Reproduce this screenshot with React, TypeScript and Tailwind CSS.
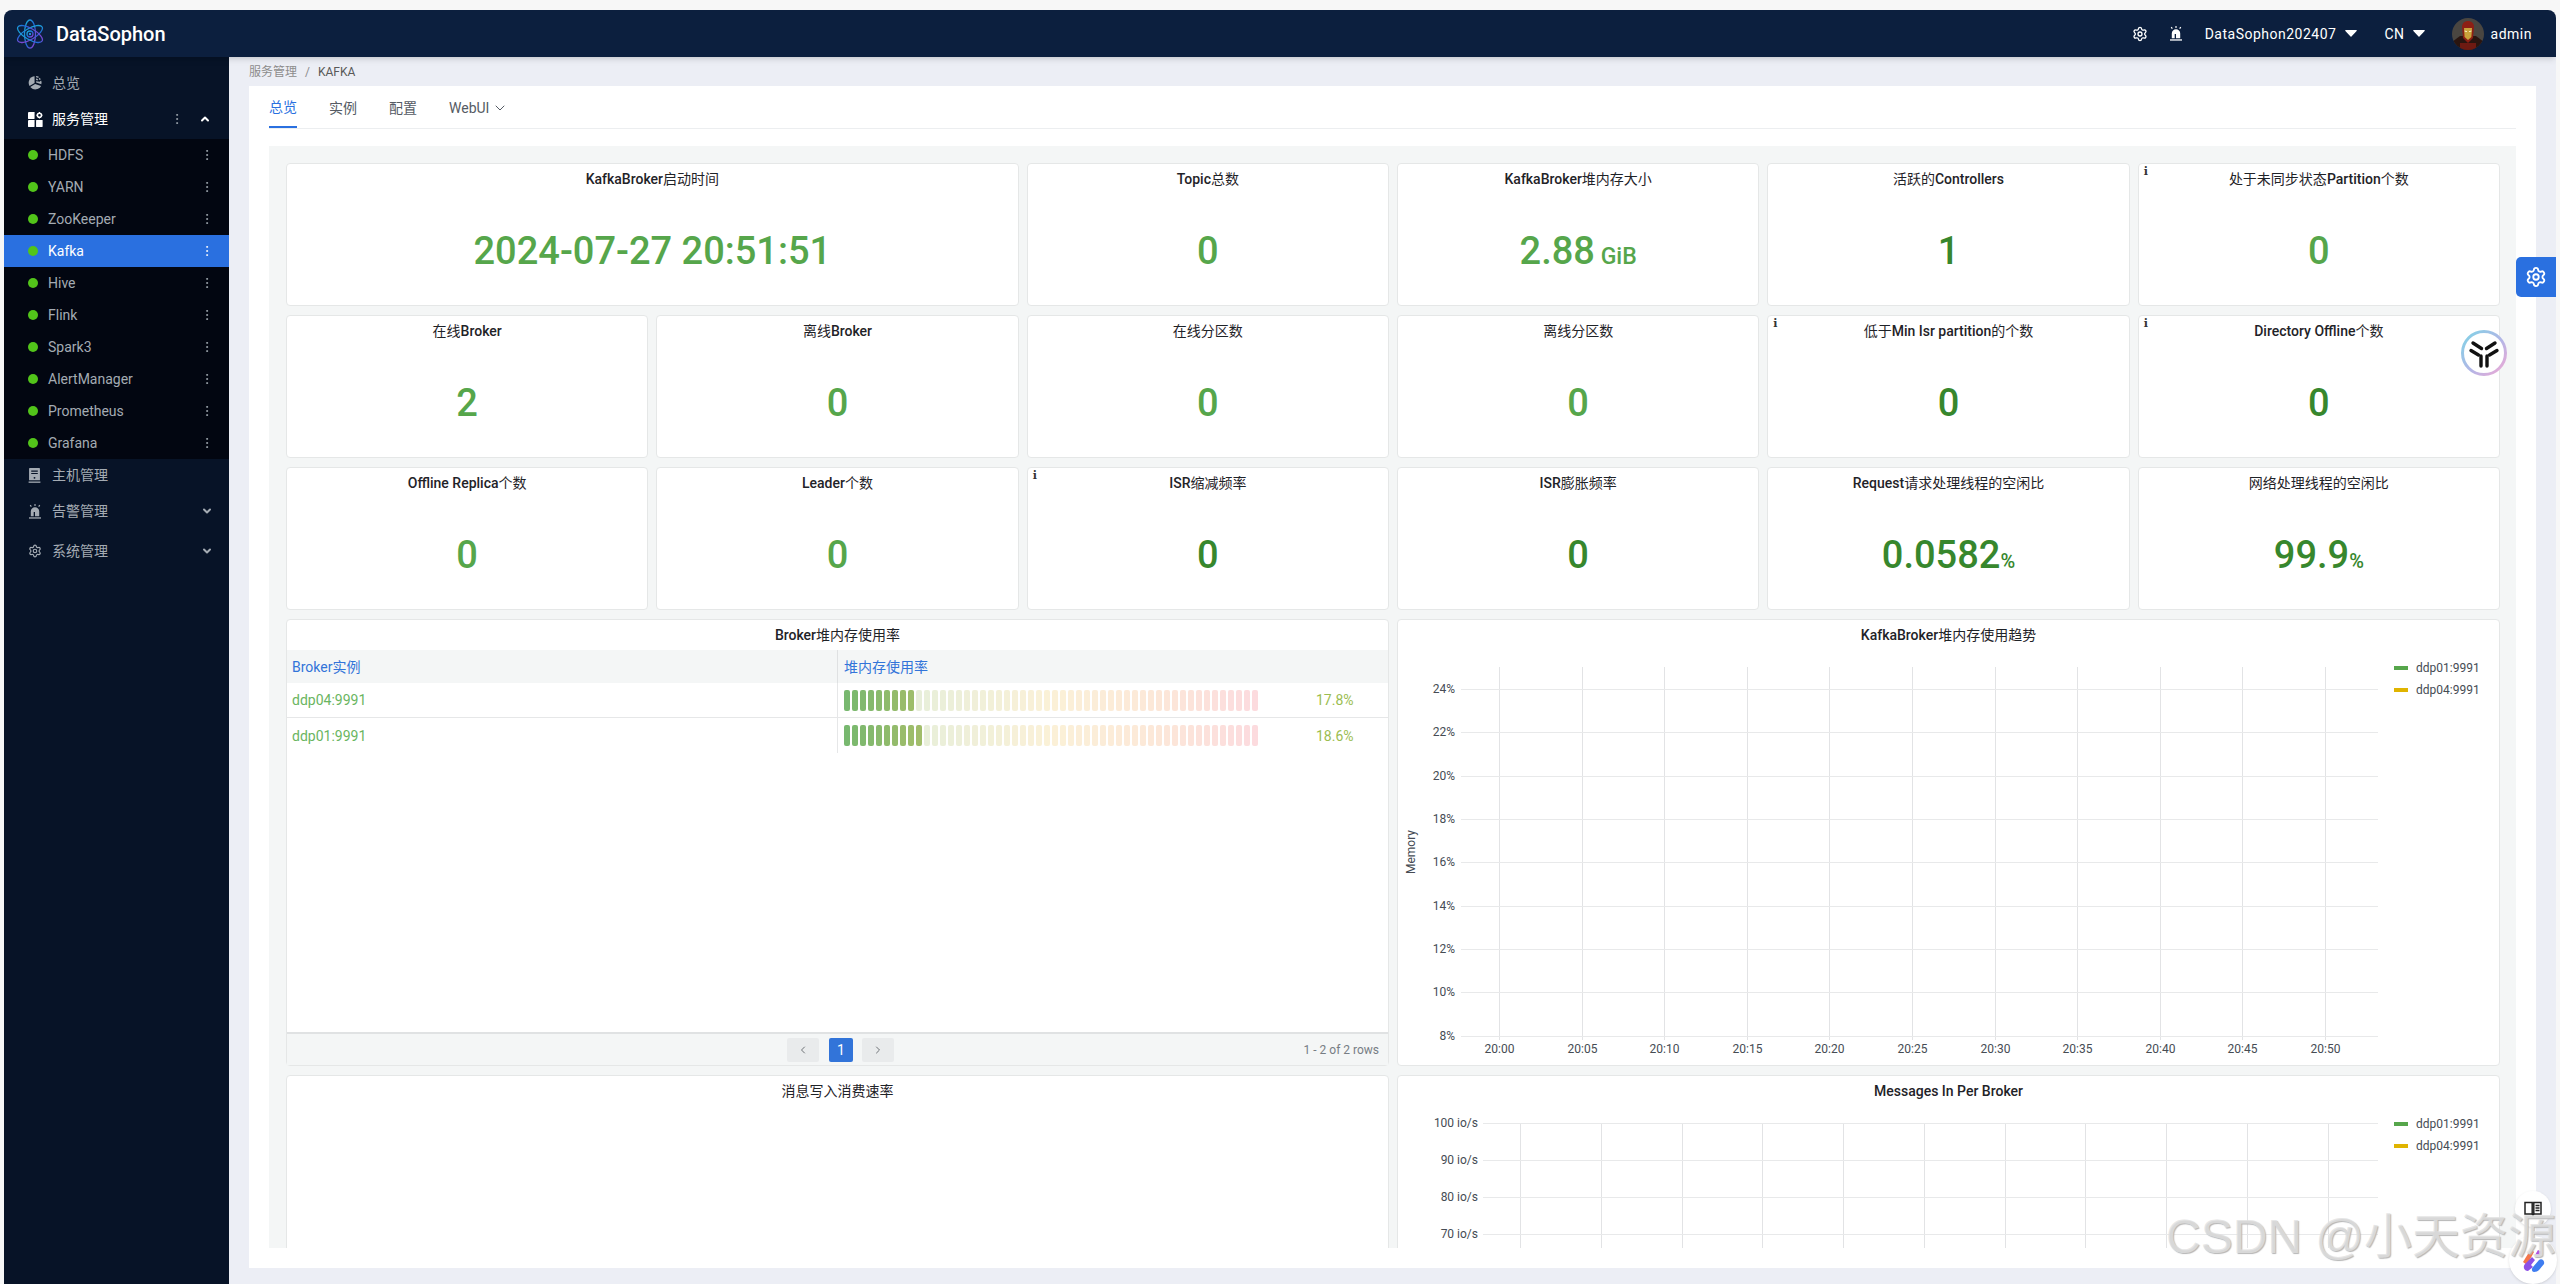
import React from "react";
import { ChevronDown, ChevronLeft, ChevronRight, ChevronUp, EllipsisVertical, Settings } from "lucide-react";

const services = ["HDFS", "YARN", "ZooKeeper", "Kafka", "Hive", "Flink", "Spark3", "AlertManager", "Prometheus", "Grafana"];

const LIGHT = "text-[#56a64b]";
const DARK = "text-[#37872d]";

const stats = [
  { title: "KafkaBroker启动时间", value: "2024-07-27 20:51:51", color: LIGHT, span: "col-span-2" },
  { title: "Topic总数", value: "0", color: LIGHT },
  { title: "KafkaBroker堆内存大小", value: "2.88", unit: " GiB", unitSize: "text-[23px]", color: LIGHT },
  { title: "活跃的Controllers", value: "1", color: DARK },
  { title: "处于未同步状态Partition个数", value: "0", color: LIGHT, info: true },
  { title: "在线Broker", value: "2", color: LIGHT },
  { title: "离线Broker", value: "0", color: LIGHT },
  { title: "在线分区数", value: "0", color: LIGHT },
  { title: "离线分区数", value: "0", color: LIGHT },
  { title: "低于Min Isr partition的个数", value: "0", color: DARK, info: true },
  { title: "Directory Offline个数", value: "0", color: DARK, info: true },
  { title: "Offline Replica个数", value: "0", color: LIGHT },
  { title: "Leader个数", value: "0", color: LIGHT },
  { title: "ISR缩减频率", value: "0", color: DARK, info: true },
  { title: "ISR膨胀频率", value: "0", color: DARK },
  { title: "Request请求处理线程的空闲比", value: "0.0582", unit: "%", unitSize: "text-[20px]", color: DARK },
  { title: "网络处理线程的空闲比", value: "99.9", unit: "%", unitSize: "text-[20px]", color: DARK },
];

const brokers = [
  { name: "ddp04:9991", pct: "17.8%", filled: 9 },
  { name: "ddp01:9991", pct: "18.6%", filled: 10 },
];

const stops: [number, number[]][] = [
  [0, [86, 166, 75]],
  [0.5, [234, 184, 57]],
  [0.75, [240, 140, 60]],
  [1, [242, 73, 92]],
];

function gaugeColor(t: number, alpha: number) {
  let i = 0;
  while (i < stops.length - 2 && t > stops[i + 1][0]) i++;
  const [t0, c0] = stops[i];
  const [t1, c1] = stops[i + 1];
  const k = (t - t0) / (t1 - t0);
  const c = c0.map((v, n) => Math.round(v + (c1[n] - v) * k));
  return `rgba(${c[0]},${c[1]},${c[2]},${alpha})`;
}

const Gauge = ({ filled }: { filled: number }) => (
  <div className="flex gap-[2px]">
    {Array.from({ length: 52 }).map((_, i) => (
      <div
        key={i}
        className="h-[21px] w-[6px] rounded-[2px]"
        style={{ backgroundColor: gaugeColor(i / 51, i < filled ? 0.8 : 0.2) }}
      />
    ))}
  </div>
);

const Logo = () => (
  <svg width="28" height="30" viewBox="0 0 28 30" fill="none">
    <defs>
      <linearGradient id="atom" x1="0" y1="0" x2="1" y2="1">
        <stop offset="0" stopColor="#19b5d8" />
        <stop offset="0.55" stopColor="#2266d8" />
        <stop offset="1" stopColor="#a03ad0" />
      </linearGradient>
    </defs>
    <g stroke="url(#atom)" strokeWidth="1.3">
      <ellipse cx="14" cy="15" rx="5.5" ry="14" />
      <ellipse cx="14" cy="15" rx="5.5" ry="14" transform="rotate(60 14 15)" />
      <ellipse cx="14" cy="15" rx="5.5" ry="14" transform="rotate(-60 14 15)" />
      <circle cx="14" cy="15" r="3" />
    </g>
    <circle cx="14" cy="15" r="1.2" fill="#2a8ae0" />
  </svg>
);

const PieIcon = () => (
  <svg width="15" height="15" viewBox="0 0 16 16" fill="#a4abb3">
    <path d="M7 1.2A7 7 0 0 0 1.6 11.6L7 8.6z" />
    <path d="M2.4 12.8A7 7 0 0 0 14 11.6L7.6 9.6z" />
    <path d="M8.6 1v1.5a5 5 0 0 1 2.2.7l.8-1.3A6.6 6.6 0 0 0 8.6 1zM8.6 3.8v1.5c.6.1 1 .3 1.5.6l.8-1.2a5 5 0 0 0-2.3-.9zM12.4 3l-1 1.2c.4.4.7.7 1 1.2l1.3-.8c-.4-.6-.8-1.1-1.3-1.6zM8.6 6.6V8l5.6 1.8A6.6 6.6 0 0 0 14.2 6l-1.4.5c.1.3.2.5.2.8z" />
  </svg>
);

const AppIcon = () => (
  <svg width="15" height="15" viewBox="0 0 16 16" fill="#fff">
    <rect x="0" y="0" width="7" height="7.4" rx="0.5" />
    <rect x="0" y="8.6" width="7" height="7.4" rx="0.5" />
    <rect x="8.6" y="8.6" width="7" height="7.4" rx="0.5" />
    <circle cx="12.2" cy="3.4" r="2.2" fill="none" stroke="#fff" strokeWidth="1.6" />
    <path d="M12.2 0v1M12.2 5.8v1M9 3.4h1M14.4 3.4h1" stroke="#fff" strokeWidth="1.2" />
  </svg>
);

const ServerIcon = () => (
  <svg width="13" height="15" viewBox="0 0 13 16" fill="#a4abb3">
    <path d="M1.5 0h10a.8.8 0 0 1 .8.8V13H.7V.8a.8.8 0 0 1 .8-.8zM3 2.6v1.3h7V2.6zm0 2.6v1.3h7V5.2zm3.5 4.3a1 1 0 1 0 0 2 1 1 0 0 0 0-2z" fillRule="evenodd" />
    <rect x="0.2" y="14.4" width="12.6" height="1.4" />
  </svg>
);

const SirenIcon = ({ color = "#a4abb3" }: { color?: string }) => (
  <svg width="14" height="15" viewBox="0 0 14 16" fill={color}>
    <path d="M2.5 13V8a4.5 4.5 0 0 1 9 0v5H7V8.5H5.6V13z" />
    <rect x="0.6" y="14.2" width="12.8" height="1.4" />
    <path d="M6.4 0h1.2v2H6.4zM1.4 1.6l1-.8 1.2 1.6-1 .8zM12.6 1.6l-1-.8-1.2 1.6 1 .8z" />
  </svg>
);

const Caret = () => (
  <svg width="12" height="7" viewBox="0 0 12 7" fill="#fff">
    <path d="M.8 0h10.4a.6.6 0 0 1 .45 1L6.45 6.6a.6.6 0 0 1-.9 0L.35 1A.6.6 0 0 1 .8 0z" />
  </svg>
);

const Avatar = () => (
  <svg width="32" height="32" viewBox="0 0 32 32" className="rounded-full">
    <rect width="32" height="32" fill="#4a4641" />
    <path d="M0 32V24l8-6 16 0 8 6v8z" fill="#2a1510" />
    <path d="M10 9c0-4 3-6 6-6s6 2 6 6l-1 11-5 5-5-5z" fill="#8d1f14" />
    <path d="M12 10h8l-.6 9-3.4 3-3.4-3z" fill="#c9a23a" />
    <path d="M12.6 12.5l2.4.8v.8l-2.4-.5zM19.4 12.5l-2.4.8v.8l2.4-.5z" fill="#fff6d8" />
    <path d="M8 25h16v7H8z" fill="#6e1a12" />
  </svg>
);

const YLogo = () => (
  <svg width="48" height="48" viewBox="0 0 48 48" fill="none">
    <defs>
      <linearGradient id="ring" x1="0" y1="0" x2="1" y2="1">
        <stop offset="0" stopColor="#7fd3e6" />
        <stop offset="0.55" stopColor="#b3b6e6" />
        <stop offset="1" stopColor="#f0a8d4" />
      </linearGradient>
    </defs>
    <circle cx="24" cy="24" r="23" fill="#fff" />
    <circle cx="24" cy="24" r="21.5" stroke="url(#ring)" strokeWidth="3" />
    <g stroke="#111" strokeWidth="3.4" strokeLinecap="round">
      <path d="M13 14l8.5 5.5M35 14l-8.5 5.5" />
      <path d="M11 21.5l7.5 4.5M37 21.5l-7.5 4.5" />
      <path d="M21 27v10M27 27v10" />
    </g>
  </svg>
);

const BookIcon = () => (
  <svg width="18" height="16" viewBox="0 0 18 16" fill="none" stroke="#222" strokeWidth="1.5">
    <path d="M1 1.5h7.2v11.5H1zM9.8 1.5H17v11.5H9.8z" />
    <path d="M8.2 13l.8 2 .8-2M11.5 4.5h4M11.5 7h4M11.5 9.5h4" />
  </svg>
);

const BrainIcon = () => (
  <svg width="26" height="26" viewBox="0 0 26 26">
    <path d="M3 15L11 2l3 3-7 13z" fill="#f4754a" />
    <path d="M8 24c-4 0-6-5-2-8l6-6 3 3-4 5 2 2z" fill="#8d4fe6" />
    <path d="M14 25c-2 0-3-3-1-5l6-7c3-2 6 1 5 4l-5 6c-1 1-3 2-5 2z" fill="#3f7df0" />
    <path d="M15 8l3-5 4 2-4 6z" fill="#b04fe0" />
  </svg>
);

// latin part of a title is medium weight, the CJK font stays regular
const Title = ({ text }: { text: string }) => (
  <div className="h-[30px] pt-[5px] text-center text-sm leading-[20px] text-[#1f2328]">
    {text.split(/([A-Za-z ]+)/).map((part, i) =>
      /[A-Za-z]/.test(part) ? (
        <span key={i} className="font-medium">{part}</span>
      ) : (
        part
      )
    )}
  </div>
);

const StatCard = ({ title, value, unit, unitSize, color, span, info }: (typeof stats)[number]) => (
  <div className={`relative flex h-[143px] flex-col rounded-[4px] border border-[#e5e7e7] bg-white ${span ?? ""}`}>
    {info && (
      <span className="absolute left-[5px] top-[1px] font-[DejaVu_Serif,serif] text-[11px] font-bold leading-[14px] text-[#333]">
        i
      </span>
    )}
    <Title text={title} />
    <div className={`flex flex-1 items-center justify-center pt-[3px] text-[38px] font-medium leading-none whitespace-pre ${color}`}>
      <span>
        {value}
        {unit && <span className={unitSize}>{unit}</span>}
      </span>
    </div>
  </div>
);

const hLines1 = [689, 732, 776, 819, 862, 906, 949, 992, 1036];
const yLabels1 = ["24%", "22%", "20%", "18%", "16%", "14%", "12%", "10%", "8%"];
const xTicks1 = ["20:00", "20:05", "20:10", "20:15", "20:20", "20:25", "20:30", "20:35", "20:40", "20:45", "20:50"];
const hLines2 = [1123, 1160, 1197, 1234];
const yLabels2 = ["100 io/s", "90 io/s", "80 io/s", "70 io/s"];

const Legend = ({ y }: { y: number }) => (
  <g fontSize="12" fill="#464c54">
    <rect x="2395" y={y - 2} width="14" height="4" fill="#56a64b" />
    <text x="2417" y={y + 4}>ddp01:9991</text>
    <rect x="2395" y={y + 20} width="14" height="4" fill="#e0b400" />
    <text x="2417" y={y + 26}>ddp04:9991</text>
  </g>
);

const HeapChart = () => (
  <svg width="1100" height="415" viewBox="1399 650 1100 415" className="block">
    {xTicks1.map((t, i) => {
      const x = Math.round(1500 + 82.6 * i) + 0.5;
      return (
        <g key={t}>
          <line x1={x} x2={x} y1="667" y2="1040" stroke="#e2e3e5" />
          <text x={x} y="1053" textAnchor="middle" fontSize="12" fill="#464c54">{t}</text>
        </g>
      );
    })}
    {hLines1.map((y, i) => (
      <g key={y}>
        <line x1="1462" x2="2379" y1={y + 0.5} y2={y + 0.5} stroke="#e8e9ea" />
        <text x="1456" y={y + 4} textAnchor="end" fontSize="12" fill="#464c54">{yLabels1[i]}</text>
      </g>
    ))}
    <text x="0" y="0" fontSize="12" fill="#464c54" textAnchor="middle" transform="translate(1416 852) rotate(-90)">Memory</text>
    <Legend y={668} />
  </svg>
);

const MessagesChart = () => (
  <svg width="1100" height="142" viewBox="1399 1106 1100 142" className="block">
    {Array.from({ length: 11 }).map((_, i) => {
      const x = Math.round(1521 + 80.75 * i) + 0.5;
      return <line key={i} x1={x} x2={x} y1="1123" y2="1248" stroke="#e2e3e5" />;
    })}
    {hLines2.map((y, i) => (
      <g key={y}>
        <line x1="1484" x2="2379" y1={y + 0.5} y2={y + 0.5} stroke="#e8e9ea" />
        <text x="1479" y={y + 4} textAnchor="end" fontSize="12" fill="#464c54">{yLabels2[i]}</text>
      </g>
    ))}
    <Legend y={1124} />
  </svg>
);

const App = () => {
  return (
    <div className="relative h-[1284px] w-[2560px] overflow-hidden bg-[#f7f7f7] px-[4px] pt-[10px] font-[Roboto,Noto_Sans_CJK_SC,sans-serif]">
      <div className="flex h-[1274px] flex-col overflow-hidden rounded-t-lg">
        {/* Top bar */}
        <header className="relative z-10 flex h-[47px] items-center bg-[#0c1f3e] pl-[12px] pr-[24px] text-white shadow-md">
          <Logo />
          <span className="ml-[12px] text-[20px] font-medium">DataSophon</span>
          <div className="ml-auto flex items-center text-sm tracking-[0.5px]">
            <Settings size={16} />
            <span className="ml-[21px]"><SirenIcon color="#fff" /></span>
            <span className="ml-[22px]">DataSophon202407</span>
            <span className="ml-[9px]"><Caret /></span>
            <span className="ml-[27px]">CN</span>
            <span className="ml-[8px]"><Caret /></span>
            <span className="ml-[27px]"><Avatar /></span>
            <span className="ml-[7px]">admin</span>
          </div>
        </header>

        <div className="flex flex-1 overflow-hidden">
          {/* Sidebar */}
          <aside className="w-[225px] shrink-0 bg-[#071327] text-sm text-[#a4abb3]">
            <div className="flex h-[52px] items-center pl-[24px] pb-[1px]">
              <PieIcon />
              <span className="ml-[9px]">总览</span>
            </div>
            <div className="flex h-[30px] items-center pl-[24px] pb-[10px] text-white">
              <AppIcon />
              <span className="ml-[9px]">服务管理</span>
              <EllipsisVertical size={14} strokeWidth={1.5} className="ml-[62px] text-[#a4abb3]" />
              <ChevronUp size={12} strokeWidth={4} className="ml-[15px]" />
            </div>
            <div className="bg-[#020611]">
              {services.map((s) => (
                <div key={s} className={`flex h-[32px] items-center pl-[24px] ${s === "Kafka" ? "bg-[#2a70e0] text-white" : ""}`}>
                  <span className="h-[10px] w-[10px] rounded-full bg-[#52c41a]" />
                  <span className="ml-[10px] flex-1">{s}</span>
                  <EllipsisVertical size={14} strokeWidth={1.5} className="mr-[15px]" />
                </div>
              ))}
            </div>
            <div className="flex h-[32px] items-center pl-[24px]">
              <ServerIcon />
              <span className="ml-[11px]">主机管理</span>
            </div>
            <div className="mt-[2px] flex h-[36px] items-center pl-[24px]">
              <SirenIcon />
              <span className="ml-[10px] flex-1">告警管理</span>
              <ChevronDown size={12} strokeWidth={4} className="mr-[16px]" />
            </div>
            <div className="mt-[4px] flex h-[36px] items-center pl-[24px]">
              <Settings size={14} />
              <span className="ml-[10px] flex-1">系统管理</span>
              <ChevronDown size={12} strokeWidth={4} className="mr-[16px]" />
            </div>
          </aside>

          {/* Main */}
          <main className="flex-1 bg-[#eceef5] px-[20px]">
            <div className="flex h-[29px] items-center text-xs">
              <span className="text-[#8c8c8c]">服务管理</span>
              <span className="mx-[8px] text-[#8c8c8c]">/</span>
              <span className="text-[#595959]">KAFKA</span>
            </div>
            <div className="h-[1182px] bg-white px-[20px]">
              <div className="flex h-[43px] items-stretch gap-[32px] border-b border-[#eceef0] pt-[1px] text-sm text-[#555b64]">
                <div className="flex items-center border-b-2 border-[#2a70e0] text-[#2a70e0]">总览</div>
                <div className="flex items-center">实例</div>
                <div className="flex items-center">配置</div>
                <div className="flex items-center gap-[3px]">WebUI <ChevronDown size={16} strokeWidth={1.5} /></div>
              </div>

              <div className="mt-[17px] h-[1102px] overflow-hidden bg-[#f4f6f6] pl-[17px] pr-[16px] pt-[17px]">
                <div className="grid grid-cols-6 gap-x-[8px] gap-y-[9px]">
                  {stats.map((s) => (
                    <StatCard key={s.title} {...s} />
                  ))}

                  {/* Heap table */}
                  <div className="col-span-3 flex h-[447px] flex-col rounded-[4px] border border-[#e5e7e7] bg-white">
                    <Title text="Broker堆内存使用率" />
                    <div className="grid grid-cols-[550px_1fr] text-sm">
                      <div className="flex h-[33px] items-center bg-[#f4f6f6] pl-[5px] text-[#3274d9]">Broker实例</div>
                      <div className="flex h-[33px] items-center border-l border-[#dfe1e2] bg-[#f4f6f6] pl-[6px] text-[#3274d9]">堆内存使用率</div>
                      {brokers.map((b, i) => (
                        <React.Fragment key={b.name}>
                          <div className={`flex h-[35px] items-center pl-[5px] text-[#6ab55f] ${i === 0 ? "border-b border-[#e6e7e8]" : ""}`}>{b.name}</div>
                          <div className={`flex h-[35px] items-center border-l border-[#e6e7e8] pl-[6px] ${i === 0 ? "border-b" : ""}`}>
                            <Gauge filled={b.filled} />
                            <span className="ml-[58px] text-[#9bbd50]">{b.pct}</span>
                          </div>
                        </React.Fragment>
                      ))}
                    </div>
                    <div className="mt-auto flex h-[33px] items-center border-t-2 border-[#e0e2e3] bg-[#f4f6f6] pl-[500px]">
                      <span className="flex h-[24px] w-[32px] items-center justify-center rounded-[2px] bg-[#e9ebec] text-[#6e7276]">
                        <ChevronLeft size={12} />
                      </span>
                      <span className="ml-[10px] flex h-[24px] w-[24px] items-center justify-center rounded-[2px] bg-[#3274d9] text-sm text-white">1</span>
                      <span className="ml-[9px] flex h-[24px] w-[32px] items-center justify-center rounded-[2px] bg-[#e9ebec] text-[#6e7276]">
                        <ChevronRight size={12} />
                      </span>
                      <span className="ml-auto pr-[9px] text-xs text-[#777d84]">1 - 2 of 2 rows</span>
                    </div>
                  </div>

                  <div className="col-span-3 h-[447px] rounded-[4px] border border-[#e5e7e7] bg-white">
                    <Title text="KafkaBroker堆内存使用趋势" />
                    <HeapChart />
                  </div>

                  <div className="col-span-3 h-[447px] rounded-[4px] border border-[#e5e7e7] bg-white">
                    <Title text="消息写入消费速率" />
                  </div>

                  <div className="col-span-3 h-[447px] rounded-[4px] border border-[#e5e7e7] bg-white">
                    <Title text="Messages In Per Broker" />
                    <MessagesChart />
                  </div>
                </div>
              </div>
            </div>
          </main>
        </div>
      </div>

      {/* Floating widgets */}
      <div className="absolute left-[2516px] top-[257px] flex h-[40px] w-[40px] items-center justify-center rounded-l-[5px] bg-[#2a70e0] text-white">
        <Settings size={22} />
      </div>
      <div className="absolute left-[2460px] top-[329px]">
        <YLogo />
      </div>
      <div className="absolute left-[2515px] top-[1191px] flex h-[36px] w-[36px] items-center justify-center rounded-full bg-white shadow">
        <BookIcon />
      </div>
      <div className="absolute left-[2509px] top-[1236px] flex h-[48px] w-[48px] items-center justify-center rounded-full bg-white shadow">
        <BrainIcon />
      </div>
      <div className="absolute left-[2166px] top-[1205px] whitespace-nowrap font-[Liberation_Sans,Noto_Sans_CJK_SC,sans-serif] text-[48px] leading-[64px] text-[#e2e2e2]/80 [text-shadow:1px_1px_1px_#b5b5b5]">
        CSDN @小天资源
      </div>
    </div>
  );
};

export default App;
